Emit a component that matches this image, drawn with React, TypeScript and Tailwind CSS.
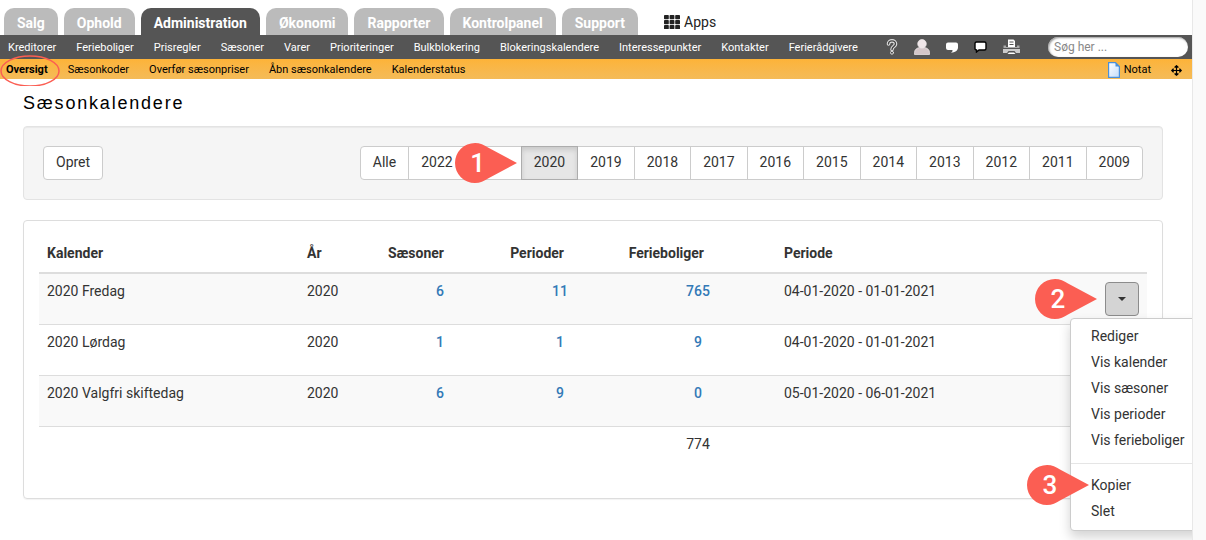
import { FaArrowsAlt } from 'react-icons/fa';

const tabs = ['Salg', 'Ophold', 'Administration', 'Økonomi', 'Rapporter', 'Kontrolpanel', 'Support'];

const menuItems = [
  'Kreditorer',
  'Ferieboliger',
  'Prisregler',
  'Sæsoner',
  'Varer',
  'Prioriteringer',
  'Bulkblokering',
  'Blokeringskalendere',
  'Interessepunkter',
  'Kontakter',
  'Ferierådgivere',
];

const subItems = ['Sæsonkoder', 'Overfør sæsonpriser', 'Åbn sæsonkalendere', 'Kalenderstatus'];

const years = ['Alle', '2022', '2021', '2020', '2019', '2018', '2017', '2016', '2015', '2014', '2013', '2012', '2011', '2009'];

interface Calendar {
  name: string;
  year: string;
  seasons: number;
  periods: number;
  houses: number;
  range: string;
}

const calendars: Calendar[] = [
  { name: '2020 Fredag', year: '2020', seasons: 6, periods: 11, houses: 765, range: '04-01-2020 - 01-01-2021' },
  { name: '2020 Lørdag', year: '2020', seasons: 1, periods: 1, houses: 9, range: '04-01-2020 - 01-01-2021' },
  { name: '2020 Valgfri skiftedag', year: '2020', seasons: 6, periods: 9, houses: 0, range: '05-01-2020 - 06-01-2021' },
];

// Drop-shaped marker pointing to the right
const Callout = ({ number, className }: { number: number; className: string }) => (
  <span className={`pointer-events-none absolute top-1/2 right-full z-20 block h-10 w-[62px] -translate-y-1/2 ${className}`}>
    <svg viewBox="0 0 62 40" className="absolute inset-0 size-full" fill="#fb5e53">
      <path d="M20 0C25 0 29 2 33 4.500L62 20L33 35.500C29 38 25 40 20 40A20 20 0 0 1 20 0Z" />
    </svg>
    <span className="relative block w-[46px] text-center text-[26px] leading-10 font-medium text-white">{number}</span>
  </span>
);

const AppsIcon = () => (
  <svg viewBox="0 0 16 14" className="h-3.5 w-4" fill="#222">
    {[0, 5, 10].map((y) =>
      [0, 5.6, 11.2].map((x) => <rect key={`${x}-${y}`} x={x} y={y} width="4.800" height="4.200" rx="0.800" />)
    )}
  </svg>
);

const HelpIcon = () => (
  <svg viewBox="0 0 12 16" className="h-4 w-3" fill="none" strokeLinecap="round" strokeLinejoin="round">
    <path d="M2.500 5C2.500 0.800 9.500 0.800 9.500 5C9.500 7.500 6 7.300 6 10.500" stroke="#e0e0e0" strokeWidth="3.600" />
    <path d="M2.500 5C2.500 0.800 9.500 0.800 9.500 5C9.500 7.500 6 7.300 6 10.500" stroke="#444" strokeWidth="1.400" />
    <circle cx="6" cy="13.700" r="1.500" fill="#444" stroke="#e0e0e0" />
  </svg>
);

const UserIcon = () => (
  <svg viewBox="0 0 16 16" className="size-4" fill="#d3c6c9" stroke="#f1ebec" strokeWidth="0.700">
    <path d="M0.500 15.500V13.500C0.500 10.500 3 9 5.500 8.500H10.500C13 9 15.500 10.500 15.500 13.500V15.500Z" />
    <circle cx="8" cy="4.800" r="4.300" fill="#efe6e8" />
  </svg>
);

const ChatIcon = () => (
  <svg viewBox="0 0 12 11" className="h-[11px] w-3" fill="#fff">
    <path d="M2 0.500H10Q12 0.500 12 2.500V5.500C12 8.500 9 10.500 5 10.700Q7 9.500 6.500 8H2Q0 8 0 6V2.500Q0 0.500 2 0.500Z" />
  </svg>
);

const MessageIcon = () => (
  <svg viewBox="0 0 13 12" className="h-3 w-[13px]" fill="#fff" stroke="#000" strokeWidth="1.400">
    <path d="M2.500 1H10.500Q12 1 12 2.500V7.500Q12 9 10.500 9H5L2.500 11V9Q1 9 1 7.500V2.500Q1 1 2.500 1Z" />
  </svg>
);

const PrinterIcon = () => (
  <svg viewBox="0 0 17 16" className="h-4 w-[17px]">
    <path d="M5 0.500H10.500L12 2V8H5Z" fill="#fff" />
    <path d="M6.500 3H10.500M6.500 5.500H10.500" stroke="#555" />
    <path d="M0.500 6.500H3V8H14V6.500H16.500V9H0.500Z" fill="#aaa" />
    <path d="M0 10H17V14H13L11.500 12H5.500L4 14H0Z" fill="#ccc" />
    <path d="M4.500 15L6 13.500H11L12.500 15Z" fill="#fff" />
  </svg>
);

const NoteIcon = () => (
  <svg viewBox="0 0 12 16" className="h-4 w-3">
    <defs>
      <linearGradient id="paper" x1="0" y1="0" x2="1" y2="1">
        <stop offset="0" stopColor="#fff" />
        <stop offset="1" stopColor="#c4dcf8" />
      </linearGradient>
    </defs>
    <path d="M0.600 0.600H7.500L11.400 4.500V15.400H0.600Z" fill="url(#paper)" stroke="#4a90d9" strokeWidth="1.200" />
    <path d="M7.500 0.600V4.500H11.400Z" fill="#4a90d9" />
  </svg>
);

const CaretIcon = () => (
  <svg viewBox="0 0 8 4" className="h-1 w-2" fill="#333">
    <path d="M0 0H8L4 4Z" />
  </svg>
);

const Header = () => (
  <header className="whitespace-nowrap">
    <div className="flex h-[35px] items-end gap-1.5 pl-1">
      {tabs.map((tab) => (
        <a
          key={tab}
          href="#"
          className={`h-[27px] rounded-t-[10px] px-[13px] text-sm leading-[30px] font-bold text-white ${
            tab === 'Administration' ? 'bg-[#555]' : 'bg-[#bbb]'
          }`}
        >
          {tab}
        </a>
      ))}
      <a href="#" className="ml-5 flex h-[27px] items-center gap-1 text-sm text-[#222]">
        <AppsIcon />
        Apps
      </a>
    </div>

    <nav className="flex h-6 items-center bg-[#555] pr-1 pl-2 text-[11px] text-white">
      <div className="flex gap-5 pt-0.5">
        {menuItems.map((item) => (
          <a key={item} href="#">
            {item}
          </a>
        ))}
      </div>
      <div className="ml-7 flex items-center gap-4">
        <button aria-label="Hjælp"><HelpIcon /></button>
        <button aria-label="Bruger"><UserIcon /></button>
        <button aria-label="Chat"><ChatIcon /></button>
        <button aria-label="Beskeder"><MessageIcon /></button>
        <button aria-label="Udskriv"><PrinterIcon /></button>
      </div>
      <input
        type="search"
        aria-label="Søg"
        placeholder="Søg her ..."
        className="ml-auto h-5 w-[140px] rounded-full bg-white px-1.5 text-xs text-black shadow-[inset_1px_1px_2px_#999] placeholder:text-[#888]"
      />
    </nav>

    <nav className="flex h-5 items-center gap-5 bg-linear-to-b from-[#fdb338] to-[#f4bb58] pt-0.5 pr-2.5 pl-1.5 text-[11px] text-black">
      <a href="#" className="relative font-bold">
        Oversigt
        <svg viewBox="0 0 60 32" className="absolute top-1/2 -left-1.5 h-8 w-[60px] -translate-y-1/2" fill="none">
          <ellipse cx="30" cy="17" rx="29" ry="15" stroke="#fb5e53" strokeWidth="1.500" />
        </svg>
      </a>
      {subItems.map((item) => (
        <a key={item} href="#">
          {item}
        </a>
      ))}
      <a href="#" className="ml-auto flex items-center gap-1">
        <NoteIcon />
        Notat
      </a>
      <button aria-label="Flyt">
        <FaArrowsAlt className="size-[11px]" />
      </button>
    </nav>
  </header>
);

const YearFilter = () => (
  <div className="flex">
    {years.map((year) => (
      <div key={year} className="group relative -ml-px first:ml-0">
        <button
          aria-label={year}
          className={`h-[34px] min-w-[49px] border px-3 pb-0.5 align-top group-first:rounded-l group-last:rounded-r ${
            year === '2020'
              ? 'relative z-10 border-[#adadad] bg-[#e6e6e6] shadow-[inset_0_3px_5px_rgba(0,0,0,0.125)]'
              : 'border-[#ccc] bg-white'
          } ${year === '2021' ? 'w-[57px]' : ''}`}
        >
          {/* 2021 sits behind the marker */}
          {year !== '2021' && year}
        </button>
        {year === '2020' && <Callout number={1} className="mr-1" />}
      </div>
    ))}
  </div>
);

const RowMenu = () => (
  <div className="relative inline-block text-left align-top">
    <button
      aria-label="Handlinger"
      className="flex h-[34px] w-[34px] items-center justify-center rounded border border-[#8c8c8c] bg-[#d4d4d4]"
    >
      <CaretIcon />
    </button>
    <Callout number={2} className="mr-2" />
    <ul className="absolute top-full -left-[35px] z-10 mt-0.5 w-40 rounded border border-[#ccc] bg-white pt-1 pb-1.5 shadow-[0_6px_12px_rgba(0,0,0,0.175)]">
      {['Rediger', 'Vis kalender', 'Vis sæsoner', 'Vis perioder', 'Vis ferieboliger'].map((label) => (
        <li key={label} className="px-5 py-[3px]">
          <a href="#">{label}</a>
        </li>
      ))}
      <li className="mt-2.5 mb-2 h-px bg-[#e5e5e5]" />
      <li className="px-5 py-[3px]">
        <a href="#" className="relative">
          Kopier
          <Callout number={3} className="mr-0.5" />
        </a>
      </li>
      <li className="px-5 py-[3px]">
        <a href="#">Slet</a>
      </li>
    </ul>
  </div>
);

const CountCell = ({ value, link = true }: { value: number; link?: boolean }) => (
  <td className="px-2 pt-[7px] pb-[9px] text-right">
    <span className="inline-block w-6 text-center">
      {link ? <a href="#" className="font-medium text-[#337ab7]">{value}</a> : value}
    </span>
  </td>
);

const CalendarTable = () => (
  <table className="mb-5 w-full table-fixed text-left">
    <colgroup>
      <col className="w-[260px]" />
      <col className="w-[76px]" />
      <col className="w-[85px]" />
      <col className="w-[120px]" />
      <col className="w-[138px]" />
      <col />
      <col className="w-[50px]" />
    </colgroup>
    <thead>
      <tr className="border-b-2 border-[#ddd]">
        <th className="px-2 pt-[7px] pb-[9px]">Kalender</th>
        <th className="px-2 pt-[7px] pb-[9px]">År</th>
        <th className="pt-[7px] pr-4 pb-[9px] text-right">Sæsoner</th>
        <th className="pt-[7px] pr-4 pb-[9px] text-right">Perioder</th>
        <th className="pt-[7px] pr-3.5 pb-[9px] text-right">Ferieboliger</th>
        <th className="pt-[7px] pb-[9px] pl-[66px]">Periode</th>
        <th></th>
      </tr>
    </thead>
    <tbody className="align-top">
      {calendars.map((calendar, index) => (
        <tr key={calendar.name} className="h-[51px] border-b border-[#ddd] odd:bg-[#f9f9f9]">
          <td className="px-2 pt-[7px] pb-[9px]">{calendar.name}</td>
          <td className="px-2 pt-[7px] pb-[9px]">{calendar.year}</td>
          <CountCell value={calendar.seasons} />
          <CountCell value={calendar.periods} />
          <CountCell value={calendar.houses} />
          <td className="pt-[7px] pb-[9px] pl-[66px]">{calendar.range}</td>
          <td className="p-2 text-right">{index === 0 && <RowMenu />}</td>
        </tr>
      ))}
      <tr>
        <td colSpan={4}></td>
        <CountCell value={774} link={false} />
        <td colSpan={2}></td>
      </tr>
    </tbody>
  </table>
);

const App = () => {
  return (
    <div className="flex min-h-screen bg-white font-['Roboto',sans-serif] text-sm text-[#333]">
      <div className="min-w-0 flex-1 overflow-hidden">
        <Header />
        <main className="pr-[29px] pl-[23px]">
          <h1 className="pt-2.5 pb-2 font-['Liberation_Sans',sans-serif] text-lg leading-[29px] tracking-widest text-black">
            Sæsonkalendere
          </h1>
          <div className="mb-5 flex justify-between rounded border border-[#e3e3e3] bg-[#f5f5f5] p-[19px] shadow-[inset_0_1px_1px_rgba(0,0,0,0.05)]">
            <button className="h-[34px] rounded border border-[#ccc] bg-white px-3 pb-0.5">Opret</button>
            <YearFilter />
          </div>
          <div className="rounded border border-[#ddd] p-[15px] shadow-[0_1px_1px_rgba(0,0,0,0.05)]">
            <CalendarTable />
          </div>
        </main>
      </div>
      <div className="w-3.5 shrink-0 border-l border-[#e8e8e8] bg-[#fafafa]" />
    </div>
  );
};

export default App;
